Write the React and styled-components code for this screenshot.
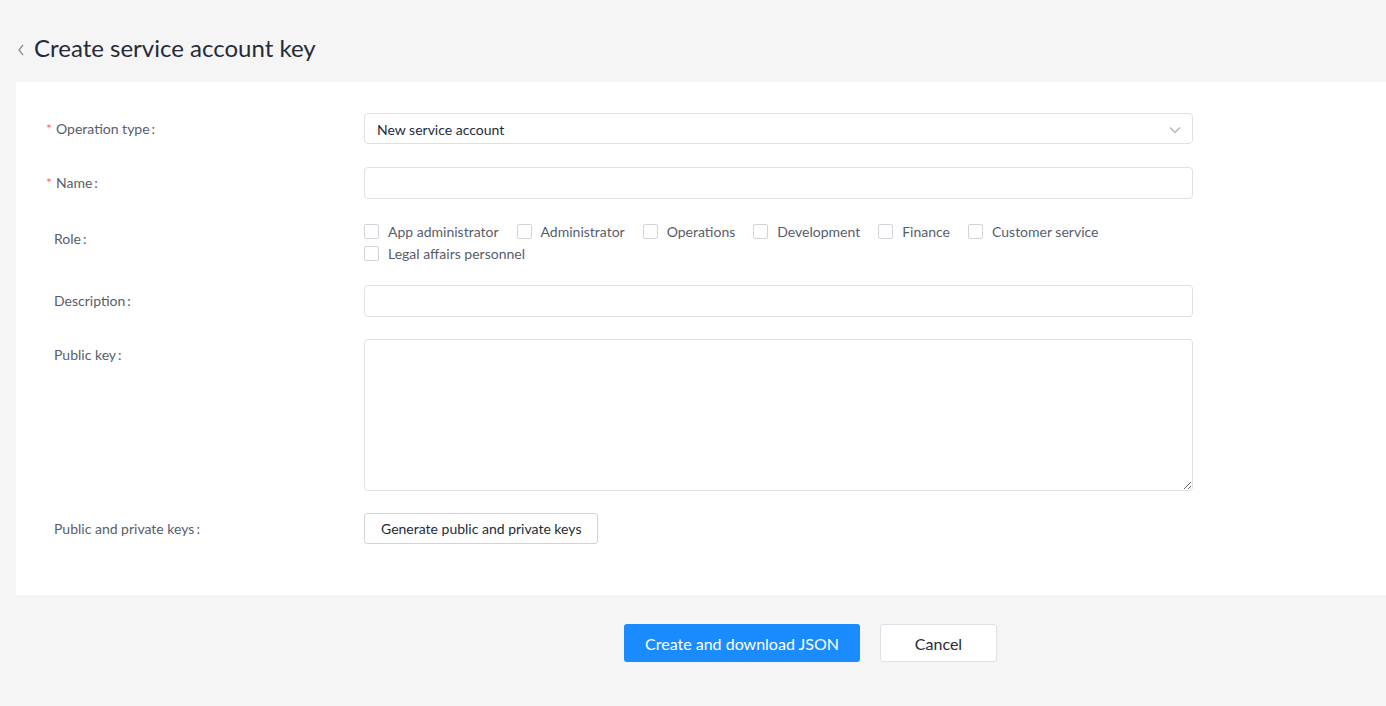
import styled, { createGlobalStyle } from 'styled-components'
import { useState } from 'react'

const GlobalStyle = createGlobalStyle`
  body {
    margin: 0;
    background: #f5f5f5;
    font-family: Lato, "Noto Sans", sans-serif;
    color: #252b3a;
  }
  * { box-sizing: border-box; }
`

const roles = [
  'App administrator',
  'Administrator',
  'Operations',
  'Development',
  'Finance',
  'Customer service',
  'Legal affairs personnel',
]

export default function App() {
  const [checked, setChecked] = useState({})

  function toggle(role) {
    setChecked({ ...checked, [role]: !checked[role] })
  }

  return (
    <Page>
      <GlobalStyle />
      <Header>
        <BackIcon viewBox="0 0 10 14">
          <path d="M7 2 L3 7 L7 12" fill="none" stroke="#8a8e99" strokeWidth="1.3" />
        </BackIcon>
        <Title>Create service account key</Title>
      </Header>

      <Card>
        <Row>
          <Label required>Operation type</Label>
          <SelectBox>
            <span>New service account</span>
            <svg width="12" height="8" viewBox="0 0 12 8">
              <path d="M1 1.5 L6 6.5 L11 1.5" fill="none" stroke="#adb0b8" strokeWidth="1.2" />
            </svg>
          </SelectBox>
        </Row>

        <Row>
          <Label required>Name</Label>
          <Input />
        </Row>

        <Row>
          <Label top={2}>Role</Label>
          <CheckGroup>
            {roles.map((role) => (
              <CheckItem key={role} onClick={() => toggle(role)}>
                <Box checked={checked[role]} />
                <span>{role}</span>
              </CheckItem>
            ))}
          </CheckGroup>
        </Row>

        <Row>
          <Label>Description</Label>
          <Input />
        </Row>

        <Row>
          <Label>Public key</Label>
          <TextArea />
        </Row>

        <Row>
          <Label>Public and private keys</Label>
          <div>
            <SmallButton>Generate public and private keys</SmallButton>
          </div>
        </Row>
      </Card>

      <Footer>
        <PrimaryButton>Create and download JSON</PrimaryButton>
        <CancelButton>Cancel</CancelButton>
      </Footer>
    </Page>
  )
}

const Page = styled.div`
  width: 1386px;
  height: 706px;
  padding-left: 16px;
  overflow: hidden;
`

const Header = styled.div`
  height: 82px;
  display: flex;
  align-items: center;
  gap: 8px;
  padding-top: 12px;
`

const BackIcon = styled.svg`
  width: 10px;
  height: 14px;
  margin-top: 6px;
`

const Title = styled.h1`
  margin: 0;
  font-size: 24px;
  font-weight: 400;
  color: #252b3a;
`

const Card = styled.div`
  background: #ffffff;
  padding: 31px 0 50px 38px;
  display: flex;
  flex-direction: column;
  gap: 22px;
`

const Row = styled.div`
  display: grid;
  grid-template-columns: 310px 829px;
  align-items: start;
`

const Label = styled.div`
  position: relative;
  font-size: 14px;
  line-height: 32px;
  color: #575d6c;
  margin-top: ${(p) => p.top || 0}px;
  padding-left: ${(p) => (p.required ? 2 : 0)}px;
  &::before {
    content: ${(p) => (p.required ? "'*'" : 'none')};
    position: absolute;
    left: -8px;
    top: 0;
    color: #f66f6a;
  }
  &::after {
    content: ':';
    margin-left: 2px;
  }
`

const SelectBox = styled.div`
  height: 31px;
  border: 1px solid #dfe1e6;
  border-radius: 4px;
  display: flex;
  align-items: center;
  justify-content: space-between;
  padding: 2px 11px 0 12px;
  font-size: 14px;
  color: #252b3a;
`

const Input = styled.input`
  height: 32px;
  border: 1px solid #dfe1e6;
  border-radius: 4px;
  padding: 0 12px;
  font-family: inherit;
  font-size: 14px;
  outline: none;
`

const TextArea = styled.textarea`
  height: 152px;
  border: 1px solid #dfe1e6;
  border-radius: 4px;
  padding: 8px 12px;
  font-family: inherit;
  font-size: 14px;
  outline: none;
  resize: vertical;
  display: block;
`

const CheckGroup = styled.div`
  display: flex;
  flex-wrap: wrap;
  column-gap: 18px;
  row-gap: 2px;
`

const CheckItem = styled.label`
  display: flex;
  align-items: center;
  gap: 9px;
  height: 20px;
  font-size: 14px;
  color: #575d6c;
  cursor: pointer;
`

const Box = styled.span`
  width: 15px;
  height: 15px;
  border: 1px solid #d2d4d9;
  border-radius: 2px;
  background: ${(p) => (p.checked ? '#1a8cff' : '#fff')};
`

const SmallButton = styled.button`
  height: 31px;
  padding: 0 16px;
  background: #fff;
  border: 1px solid #d2d4d9;
  border-radius: 3px;
  font-family: inherit;
  font-size: 14px;
  color: #252b3a;
`

const Footer = styled.div`
  display: flex;
  gap: 20px;
  padding: 29px 0 0 608px;
`

const PrimaryButton = styled.button`
  height: 38px;
  width: 236px;
  background: #1a8cff;
  color: #fff;
  border: none;
  border-radius: 3px;
  font-family: inherit;
  font-size: 16px;
`

const CancelButton = styled.button`
  height: 38px;
  width: 117px;
  background: #fff;
  color: #252b3a;
  border: 1px solid #dfe1e6;
  border-radius: 3px;
  font-family: inherit;
  font-size: 16px;
`
